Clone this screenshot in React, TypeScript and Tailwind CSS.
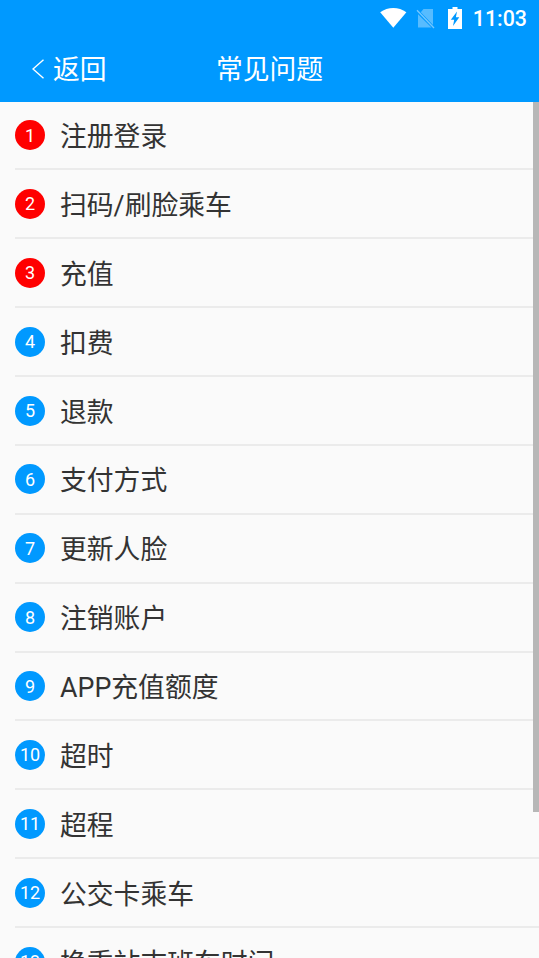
const questions = [
  "注册登录",
  "扫码/刷脸乘车",
  "充值",
  "扣费",
  "退款",
  "支付方式",
  "更新人脸",
  "注销账户",
  "APP充值额度",
  "超时",
  "超程",
  "公交卡乘车",
  "换乘站末班车时间",
]

function StatusBar() {
  return (
    <div className="flex h-[36px] items-center justify-end pr-[12px] text-white">
      <svg className="mr-[9px] h-[20px] w-[27px]" viewBox="0 0 27 20" fill="currentColor">
        <path d="M0.2 4.3C7.8-1.4 18.8-1.4 26.4 4.3L13.3 19.8Z" />
      </svg>
      <svg className="mr-[13px] h-[21px] w-[19px]" viewBox="0 0 19 21">
        <path d="M7.5 1H17V17L4.8 4.2ZM2 6.2L15.5 19.5H2Z" fill="currentColor" opacity="0.34" />
        <path d="M1 2.3L18 20" stroke="currentColor" strokeWidth="1.4" opacity="0.45" />
      </svg>
      <svg className="mr-[11px] h-[22px] w-[14px]" viewBox="0 0 14 22">
        <path d="M4.5 0H9.5V2H14V22H0V2H4.5Z" fill="currentColor" />
        <path d="M9 4.5L2.8 12.7H6.2L5 19L11.3 10.3H7.9Z" fill="#0099ff" />
      </svg>
      <span className="pt-[2px] text-[21.4px] leading-none font-medium">11:03</span>
    </div>
  )
}

export default function App() {
  return (
    <div className="relative h-[958px] w-[539px] overflow-hidden bg-[#fafafa] font-['Roboto','Noto_Sans_CJK_SC',sans-serif]">
      {/* Header */}
      <header className="h-[101.6px] bg-[#0099ff] text-white">
        <StatusBar />
        <div className="grid h-[65.6px] grid-cols-[1fr_auto_1fr] items-center text-[26.8px] leading-[40px]">
          <button className="flex items-center pl-[32px]">
            <svg className="mr-[9px] h-[20px] w-[12px]" viewBox="0 0 12 20" fill="none" stroke="currentColor" strokeWidth="1.4">
              <path d="M11.5 0.7L1 10L11.5 19.3" />
            </svg>
            <span className="pt-[3px]">返回</span>
          </button>
          <h1 className="pt-[3px]">常见问题</h1>
        </div>
      </header>

      {/* Question list */}
      <ul>
        {questions.map((question, index) => (
          <li key={question} className="ml-[15px] flex h-[68.88px] items-center border-b-2 border-[#ebebeb]">
            <span
              className={`mr-[15px] flex size-[30px] items-center justify-center rounded-full pt-px text-[18px] leading-none text-white ${
                index < 3 ? "bg-[#ff0000]" : "bg-[#0099ff]"
              }`}
            >
              {index + 1}
            </span>
            <span className="pt-[4px] text-[26.8px] leading-[40px] text-[#333333]">{question}</span>
          </li>
        ))}
      </ul>

      {/* Scrollbar */}
      <div className="absolute top-[102px] right-0 h-[710px] w-[6px] bg-[#b7b7b7]" />
    </div>
  )
}
